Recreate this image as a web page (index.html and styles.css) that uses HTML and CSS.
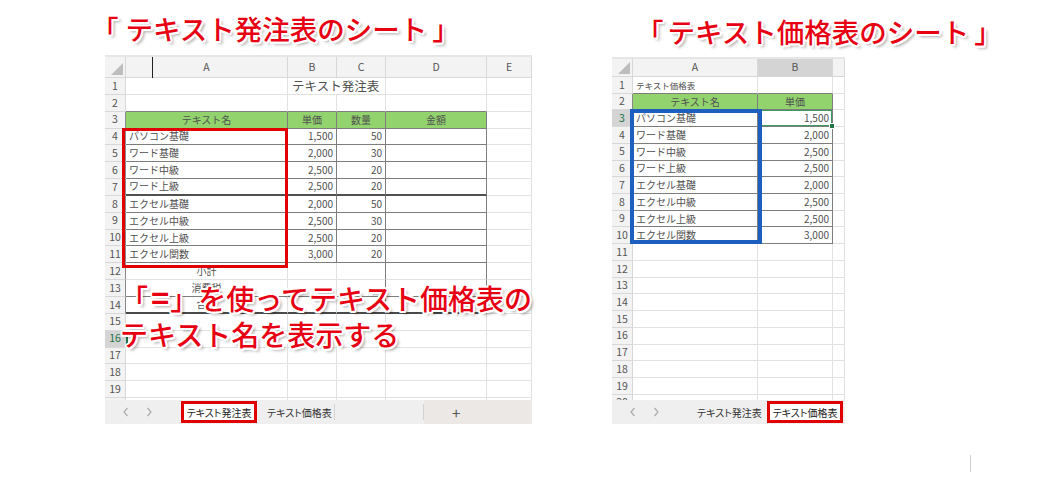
FILE: index.html
```html
<!DOCTYPE html>
<html lang="ja">
<head>
<meta charset="utf-8">
<title>テキスト発注表 / テキスト価格表</title>
<link rel="stylesheet" href="styles.css">
</head>
<body>
<div class="page">
  <div class="panels">
    <section class="panel panel-left">
      <h2 class="title title-left"><span class="bo">「</span>テキスト発注表のシート<span class="bc">」</span></h2>
      <div class="sheet sheet-left">
        <div class="grid grid-left">
          <div class="h corner"></div><div class="h">A</div><div class="h">B</div><div class="h">C</div><div class="h">D</div><div class="h">E</div>
          <div class="h">1</div><div class="c"></div><div class="c span2 big">テキスト発注表</div><div class="c"></div><div class="c"></div>
          <div class="h">2</div><div class="c bb"></div><div class="c bb"></div><div class="c bb"></div><div class="c bb"></div><div class="c"></div>
          <div class="h hl">3</div><div class="c t g m">テキスト名</div><div class="c t g m">単価</div><div class="c t g m">数量</div><div class="c t g m">金額</div><div class="c"></div>
          <div class="h hl">4</div><div class="c t">パソコン基礎</div><div class="c t r">1,500</div><div class="c t r">50</div><div class="c t"></div><div class="c"></div>
          <div class="h hl">5</div><div class="c t">ワード基礎</div><div class="c t r">2,000</div><div class="c t r">30</div><div class="c t"></div><div class="c"></div>
          <div class="h hl">6</div><div class="c t">ワード中級</div><div class="c t r">2,500</div><div class="c t r">20</div><div class="c t"></div><div class="c"></div>
          <div class="h hl">7</div><div class="c t bb2">ワード上級</div><div class="c t r bb2">2,500</div><div class="c t r bb2">20</div><div class="c t bb2"></div><div class="c"></div>
          <div class="h hl">8</div><div class="c t">エクセル基礎</div><div class="c t r">2,000</div><div class="c t r">50</div><div class="c t"></div><div class="c"></div>
          <div class="h hl">9</div><div class="c t">エクセル中級</div><div class="c t r">2,500</div><div class="c t r">30</div><div class="c t"></div><div class="c"></div>
          <div class="h hl">10</div><div class="c t">エクセル上級</div><div class="c t r">2,500</div><div class="c t r">20</div><div class="c t"></div><div class="c"></div>
          <div class="h hl">11</div><div class="c t">エクセル関数</div><div class="c t r">3,000</div><div class="c t r">20</div><div class="c t"></div><div class="c"></div>
          <div class="h hl">12</div><div class="c m">小計</div><div class="c"></div><div class="c dr"></div><div class="c dr"></div><div class="c"></div>
          <div class="h hl">13</div><div class="c m bb">消費税</div><div class="c bb"></div><div class="c bb dr"></div><div class="c bb dr"></div><div class="c"></div>
          <div class="h hl">14</div><div class="c m bk">合計</div><div class="c bk"></div><div class="c bk dr"></div><div class="c bk dr"></div><div class="c"></div>
          <div class="h">15</div><div class="c"></div><div class="c"></div><div class="c"></div><div class="c"></div><div class="c"></div>
          <div class="h hsel">16</div><div class="c cur"></div><div class="c"></div><div class="c"></div><div class="c"></div><div class="c"></div>
          <div class="h">17</div><div class="c"></div><div class="c"></div><div class="c"></div><div class="c"></div><div class="c"></div>
          <div class="h">18</div><div class="c"></div><div class="c"></div><div class="c"></div><div class="c"></div><div class="c"></div>
          <div class="h">19</div><div class="c"></div><div class="c"></div><div class="c"></div><div class="c"></div><div class="c"></div>
          <div class="h">20</div><div class="c"></div><div class="c"></div><div class="c"></div><div class="c"></div><div class="c"></div>
        </div>
        <div class="tabs">
          <div class="navs">
            <svg class="chev" width="6" height="10" viewBox="0 0 6 10"><path d="M4.5 1 L1 5 L4.5 9"/></svg>
            <svg class="chev" width="6" height="10" viewBox="0 0 6 10"><path d="M1.5 1 L5 5 L1.5 9"/></svg>
          </div>
          <div class="tab active tab-l">テキスト発注表</div>
          <div class="tab tab-l2">テキスト価格表</div>
          <div class="tab-rest"></div>
          <div class="tab-add">+</div>
        </div>
        <div class="ibeam"></div>
      </div>
      <div class="mark mark-red"></div>
      <p class="callout"><span class="cbo">「</span><span class="ceq">=</span><span class="cbc">」</span>を使ってテキスト価格表の<br>テキスト名を表示する</p>
    </section>

    <section class="panel panel-right">
      <h2 class="title title-right"><span class="bo bo-r">「</span>テキスト価格表のシート<span class="bc">」</span></h2>
      <div class="sheet sheet-right">
        <div class="grid grid-right">
          <div class="h corner"></div><div class="h">A</div><div class="h hcol">B</div><div class="h"></div>
          <div class="h">1</div><div class="c bb small">テキスト価格表</div><div class="c bb"></div><div class="c"></div>
          <div class="h hl">2</div><div class="c t g m">テキスト名</div><div class="c t g m">単価</div><div class="c"></div>
          <div class="h hsel hl">3</div><div class="c t">パソコン基礎</div><div class="c t r sel">1,500</div><div class="c"></div>
          <div class="h hl">4</div><div class="c t">ワード基礎</div><div class="c t r">2,000</div><div class="c"></div>
          <div class="h hl">5</div><div class="c t">ワード中級</div><div class="c t r">2,500</div><div class="c"></div>
          <div class="h hl">6</div><div class="c t">ワード上級</div><div class="c t r">2,500</div><div class="c"></div>
          <div class="h hl">7</div><div class="c t">エクセル基礎</div><div class="c t r">2,000</div><div class="c"></div>
          <div class="h hl">8</div><div class="c t">エクセル中級</div><div class="c t r">2,500</div><div class="c"></div>
          <div class="h hl">9</div><div class="c t">エクセル上級</div><div class="c t r">2,500</div><div class="c"></div>
          <div class="h hl">10</div><div class="c t">エクセル関数</div><div class="c t r">3,000</div><div class="c"></div>
          <div class="h">11</div><div class="c"></div><div class="c"></div><div class="c"></div>
          <div class="h">12</div><div class="c"></div><div class="c"></div><div class="c"></div>
          <div class="h">13</div><div class="c"></div><div class="c"></div><div class="c"></div>
          <div class="h">14</div><div class="c"></div><div class="c"></div><div class="c"></div>
          <div class="h">15</div><div class="c"></div><div class="c"></div><div class="c"></div>
          <div class="h">16</div><div class="c"></div><div class="c"></div><div class="c"></div>
          <div class="h">17</div><div class="c"></div><div class="c"></div><div class="c"></div>
          <div class="h">18</div><div class="c"></div><div class="c"></div><div class="c"></div>
          <div class="h">19</div><div class="c"></div><div class="c"></div><div class="c"></div>
          <div class="h">20</div><div class="c"></div><div class="c"></div><div class="c"></div>
        </div>
        <div class="tabs">
          <div class="navs">
            <svg class="chev" width="6" height="10" viewBox="0 0 6 10"><path d="M4.5 1 L1 5 L4.5 9"/></svg>
            <svg class="chev" width="6" height="10" viewBox="0 0 6 10"><path d="M1.5 1 L5 5 L1.5 9"/></svg>
          </div>
          <div class="tab tab-r1">テキスト発注表</div>
          <div class="tab active tab-r2">テキスト価格表</div>
        </div>
      </div>
      <div class="mark mark-blue"></div>
    </section>
  </div>
  <div class="footer"><span class="stray"></span></div>
</div>
</body>
</html>
```

FILE: styles.css
```css
* { box-sizing: border-box; margin: 0; padding: 0; }

body {
  width: 1038px;
  height: 478px;
  overflow: hidden;
  background: #fff;
  font-family: "Noto Sans CJK JP", "Noto Sans", sans-serif;
  color: #404040;
}

.page { display: flex; flex-direction: column; height: 478px; }

.panels { display: flex; align-items: flex-start; gap: 80px; padding-left: 105px; }

.panel { position: relative; display: flex; flex-direction: column; flex: none; }
.panel-left { width: 427px; }
.panel-right { width: 233px; }

.title {
  font-size: 27.5px;
  font-weight: 500;
  line-height: 36px;
  height: 36px;
  color: #e60012;
  white-space: nowrap;
  text-shadow:
    2px 0 0 #fff, -2px 0 0 #fff, 0 2px 0 #fff, 0 -2px 0 #fff,
    1.5px 1.5px 0 #fff, -1.5px -1.5px 0 #fff, 1.5px -1.5px 0 #fff, -1.5px 1.5px 0 #fff,
    3px 3px 3px rgba(0, 0, 0, 0.35);
}
.title-left { margin: 10px 0 9px -14px; }
.title-right { margin: 13px 0 8px 24px; }
.bo { margin-right: 7px; }
.bo-r { margin-right: 4px; }
.bc { margin-left: 5px; }

.sheet {
  position: relative;
  overflow: hidden;
  border-top: 2px solid #e6e6e6;
  background: #fff;
}
.sheet-left { height: 369px; }
.sheet-right { height: 367px; }

.grid { display: grid; overflow: hidden; }
.grid-left {
  height: 343px;
  grid-template-columns: 21px 162px 49px 49px 101px 45px;
  grid-template-rows: 21px repeat(20, 16.85px);
}
.grid-right {
  height: 341px;
  grid-template-columns: 21px 125px 75px 12px;
  grid-template-rows: 18px repeat(20, 16.72px);
}

.c, .h {
  display: flex;
  align-items: center;
  white-space: nowrap;
  border-right: 1px solid #e1e1e1;
  border-bottom: 1px solid #e1e1e1;
  line-height: 1;
}
.c { font-size: 10px; padding: 0 3px; color: #505050; }
.h {
  justify-content: center;
  background: #f3f3f3;
  border-color: #d8d8d8;
  font-size: 10.5px;
  color: #555;
}
.corner { position: relative; }
.corner::after {
  content: "";
  position: absolute;
  right: 2px;
  bottom: 2px;
  border-left: 12px solid transparent;
  border-bottom: 12px solid #bdbdbd;
}
.hl { border-right-color: #8a8a8a; }
.hsel { background: #d4d4d4; color: #217346; }
.hcol { background: #d4d4d4; }

.span2 { grid-column: span 2; }
.big { font-size: 12.5px; padding-left: 4px; }
.small { font-size: 8.5px; }

.m { justify-content: center; }
.r { justify-content: flex-end; }
.g { background: #92d36e; }
.t { border-right-color: #7d7d7d; border-bottom-color: #7d7d7d; }
.bb { border-bottom-color: #7d7d7d; }
.bb2 { border-bottom: 2px solid #505050; }
.dr { border-right-color: #7d7d7d; }
.bk { border-bottom: 2px solid #4a4a4a; }
.cur { border-left: 2px solid #217346; }

.sel { position: relative; box-shadow: inset 0 0 0 1px #3c9a5f; }
.sel::after {
  content: "";
  position: absolute;
  right: -3px;
  bottom: -3px;
  width: 4px;
  height: 4px;
  background: #217346;
  border: 1px solid #fff;
}

.tabs {
  display: flex;
  align-items: stretch;
  height: 24px;
  background: #efefef;
  font-size: 10px;
  font-feature-settings: "palt";
  color: #333;
}
.navs { display: flex; align-items: center; gap: 17px; width: 76px; padding-left: 18px; flex: none; }
.chev path { fill: none; stroke: #ababab; stroke-width: 1.2; }

.tab { display: flex; align-items: center; white-space: nowrap; flex: none; }
.tab.active {
  margin: 1px 0 1px;
  justify-content: center;
  width: 76px;
  background: #fff;
  border: 3px solid #e00000;
  color: #222;
}
.tab-l2 { width: 78px; padding-left: 10px; border-right: 1px solid #d3d3d3; margin: 4px 0; }
.tab-rest { width: 89px; border-right: 1px solid #d3d3d3; margin: 4px 0; flex: none; }
.tab-add {
  flex: 1;
  background: #ebe8e5;
  padding-left: 28px;
  font-size: 15px;
  color: #555;
  display: flex;
  align-items: center;
}
.tab-r1 { width: 79px; padding-left: 9px; }

.ibeam {
  position: absolute;
  left: 47px;
  top: 0;
  width: 1px;
  height: 21px;
  background: #222;
}

.mark { position: absolute; }
.mark-red { left: 17px; top: 128px; width: 166px; height: 140px; border: 3px solid #e00000; }
.mark-blue { left: 18px; top: 109px; width: 132px; height: 135px; border: 4px solid #1c5fbe; }

.callout {
  position: absolute;
  left: 15px;
  top: 279px;
  font-size: 28px;
  font-weight: 500;
  line-height: 36px;
  color: #e60012;
  white-space: nowrap;
  text-shadow:
    2px 0 0 #fff, -2px 0 0 #fff, 0 2px 0 #fff, 0 -2px 0 #fff,
    1.5px 1.5px 0 #fff, -1.5px -1.5px 0 #fff, 1.5px -1.5px 0 #fff, -1.5px 1.5px 0 #fff,
    3px 3px 3px rgba(0, 0, 0, 0.35);
}
.ceq { font-weight: 700; font-size: 31px; margin-left: 3px; }
.cbc { margin-left: 1px; }

.footer { padding: 31px 0 0 970px; }
.stray { display: block; width: 1px; height: 17px; background: #cfcfcf; }
```
